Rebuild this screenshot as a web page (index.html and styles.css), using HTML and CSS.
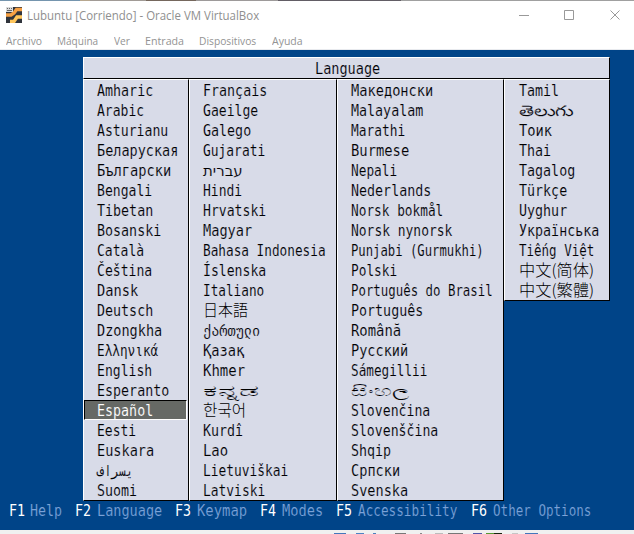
FILE: index.html
```html
<!DOCTYPE html>
<html lang="es">
<head>
<meta charset="utf-8">
<title>Lubuntu [Corriendo] - Oracle VM VirtualBox</title>
<link rel="stylesheet" href="styles.css">
</head>
<body>
<div class="backdrop"></div>
<header class="titlebar">
  <svg class="app-icon" width="16" height="16" viewBox="0 0 16 16">
    <path fill="#30343c" d="M0 0h16v16H0z"/>
    <path fill="none" stroke="#f6a043" stroke-width="3.400" d="M0 8h5l3-2 2.500-3.500H16"/>
    <path fill="none" stroke="#ffc65c" stroke-width="3.400" d="M4 14.500h4l3-4.500h5"/>
    <path fill="#d9d9d9" d="M0 0h7v5H0z"/>
    <path stroke="#666" d="M1 1.500h1m1 0h1m1 0h1M1 3.500h5"/>
  </svg>
  <h1 class="title"><span data-w="232">Lubuntu [Corriendo] - Oracle VM VirtualBox</span></h1>
  <svg class="controls" width="104" height="12" viewBox="0 0 104 12" fill="none" stroke="#999">
    <path d="M0 6.500h10M45.500 1.500h9v9h-9zM91.500 1.500l9 9m0-9l-9 9"/>
  </svg>
</header>
<nav class="menubar">
  <span class="m1"><span data-w="36">Archivo</span></span>
  <span class="m2"><span data-w="41">Máquina</span></span>
  <span class="m3"><span data-w="16">Ver</span></span>
  <span class="m4"><span data-w="39">Entrada</span></span>
  <span class="m5"><span data-w="57">Dispositivos</span></span>
  <span class="m6"><span data-w="31">Ayuda</span></span>
</nav>
<main class="screen">
  <section class="panel">
    <div class="panel-title"><span data-w="65">Language</span></div>
    <div class="columns" id="columns"></div>
  </section>
  <footer class="keys" id="keys"></footer>
</main>
<div class="below" id="below"></div>
<script src="script.js"></script>
</body>
</html>
```
FILE: styles.css
```css
* { box-sizing: border-box; }
body {
  margin: 0;
  width: 634px;
  height: 534px;
  overflow: hidden;
  background: #fff;
  font-family: "Liberation Sans", sans-serif;
}
.backdrop {
  height: 1px;
  background: linear-gradient(90deg, #7595ae 0 80px, #b7a78f 80px 90px, #a19b96 90px 146px, #75675d 146px 196px, #9d9a9a 196px 278px, #625d65 278px 401px, #a0a0a0 401px);
}
[data-w] {
  display: inline-block;
  transform-origin: 0 50%;
  white-space: pre;
}
.titlebar {
  display: flex;
  height: 29px;
  padding-left: 6px;
}
.app-icon { margin-top: 6px; }
.title {
  width: 491px;
  margin: 0 0 0 5px;
  font: 13px/29px "Open Sans", sans-serif;
  color: #8f8f8f;
  white-space: nowrap;
}
.controls { margin: 8px 0 0 1px; }
.menubar {
  display: flex;
  height: 20px;
  padding-left: 6px;
  border-bottom: 1px solid #e8eaee;
  font: 11.500px/22px "Open Sans", sans-serif;
  color: #939393;
  white-space: nowrap;
}
.m1 { width: 51px; }
.m2 { width: 57px; }
.m3 { width: 31px; }
.m4 { width: 54px; }
.m5 { width: 73px; }
.screen {
  height: 480px;
  padding: 7px 0 0;
  background: #004488;
  font: 15px/22px "DejaVu Sans Mono", "Noto Sans CJK JP", "Noto Sans", "DejaVu Sans", monospace;
  color: #000;
}
.panel { width: 527px; margin-left: 83px; }
.panel-title {
  height: 22px;
  padding-left: 231px;
  background: #d8dbe8;
  border: 1px solid;
  border-color: #fff #000 #000 #fff;
  white-space: nowrap;
}
.panel-title, .column { -webkit-text-stroke: 0.15px #d8dbe8; }
.columns { display: flex; align-items: flex-start; }
.column {
  padding: 0 0 1px;
  margin: 0;
  list-style: none;
  background: #d8dbe8;
  border: 1px solid;
  border-color: #fff #000 #000 #fff;
}
.column:nth-child(1) { width: 106px; }
.column:nth-child(2) { width: 148px; }
.column:nth-child(3) { width: 167px; }
.column:nth-child(4) { width: 106px; }
.column li {
  height: 20px;
  padding-left: 13px;
  white-space: nowrap;
}
.column:last-child li { padding-left: 14px; }
.column li:last-child { height: 19px; }
.column .selected {
  margin-right: 1px;
  padding-left: 12px;
  background: #666965;
  border: 1px solid;
  border-color: #000 #fff #fff #000;
  color: #fff;
  line-height: 20px;
  -webkit-text-stroke: 0.1px #666965;
}
.cjk {
  height: 18px;
  font-family: "Noto Sans CJK JP", sans-serif;
  font-weight: 300;
  font-size: 16px;
  line-height: 18px;
  vertical-align: top;
  -webkit-text-stroke: 0;
}
.ltr { direction: ltr; unicode-bidi: bidi-override; }
.keys {
  display: grid;
  grid-template-columns: 66px 100px 85px 76px 135px 160px;
  padding-left: 9px;
  color: #7ba2d8;
  line-height: 20px;
  white-space: nowrap;
  -webkit-text-stroke: 0.15px #004488;
}
.keys div { display: flex; }
.keys b {
  flex: none;
  width: 22px;
  font-weight: 400;
  color: #fff;
  -webkit-text-stroke: 0;
}
.keys div:first-child b { width: 21px; }
.below {
  display: flex;
  align-items: flex-end;
  height: 4px;
  background: #f0f0f0;
}
.below i { height: 1px; }
```
FILE: script.js
```js
// Each label is paired with the width it occupies on the bitmap console.
const columns = [
  [["Amharic",56],["Arabic",47],["Asturianu",71],["Беларуская",81],["Български",74],["Bengali",55],["Tibetan",56],["Bosanski",64],["Català",47],["Čeština",55],["Dansk",41],["Deutsch",56],["Dzongkha",65],["Ελληνικά",61],["English",55],["Esperanto",72],["Español",56],["Eesti",39],["Euskara",57],["فارسی",36,"ltr"],["Suomi",40]],
  [["Français",64],["Gaeilge",55],["Galego",48],["Gujarati",62],["עברית",40],["Hindi",39],["Hrvatski",63],["Magyar",49],["Bahasa Indonesia",123],["Íslenska",63],["Italiano",61],["日本語",45,"cjk"],["ქართული",57],["Қазақ",41],["Khmer",42],["ಕನ್ನಡ",57],["한국어",43,"cjk"],["Kurdî",40],["Lao",25],["Lietuviškai",85],["Latviski",62]],
  [["Македонски",82],["Malayalam",72],["Marathi",54],["Burmese",58],["Nepali",46],["Nederlands",80],["Norsk bokmål",92],["Norsk nynorsk",101],["Punjabi (Gurmukhi)",133],["Polski",46],["Português do Brasil",142],["Português",72],["Română",50],["Русский",57],["Sámegillii",76],["සිංහල",57],["Slovenčina",79],["Slovenščina",87],["Shqip",40],["Српски",49],["Svenska",57]],
  [["Tamil",40],["తెలుగు",54],["Тоик",33],["Thai",32],["Tagalog",56],["Türkçe",48],["Uyghur",48],["Українська",80],["Tiếng Việt",75],["中文(简体)",75,"cjk"],["中文(繁體)",75,"cjk"]]
];
const keys = [["F1","Help",32],["F2","Language",65],["F3","Keymap",50],["F4","Modes",41],["F5","Accessibility",99],["F6","Other Options",98]];
const fragments = [[334,12,"#4376bb"],[356,8,"#4c83c4"],[373,3,"#4980be"],[395,11,"#777"],[420,2,"#888"],[435,8,"#bbb"],[448,15,"#777"],[473,9,"#5155a7"],[486,8,"#569831"],[494,8,"#17230e"],[512,6,"#c5c5c5"],[525,13,"#4376bb"]];

const label = (text, width, kind = "") => {
  const span = document.createElement("span");
  span.textContent = text;
  span.dataset.w = width;
  if (kind) span.className = kind;
  return span;
};

for (const entries of columns) {
  const list = document.createElement("ul");
  list.className = "column";
  for (const entry of entries) {
    const item = document.createElement("li");
    if (entry[0] === "Español") item.className = "selected";
    item.append(label(...entry));
    list.append(item);
  }
  document.getElementById("columns").append(list);
}

for (const [key, name, width] of keys) {
  const item = document.createElement("div");
  const cap = document.createElement("b");
  cap.append(label(key, 16));
  item.append(cap, label(name, width));
  document.getElementById("keys").append(item);
}

let edge = 0;
for (const [x, width, color] of fragments) {
  const bit = document.createElement("i");
  bit.style.marginLeft = `${x - edge}px`;
  bit.style.width = `${width}px`;
  bit.style.background = color;
  edge = x + width;
  document.getElementById("below").append(bit);
}

for (const span of document.querySelectorAll("[data-w]")) {
  span.style.transform = `scaleX(${span.dataset.w / span.offsetWidth})`;
}
```
